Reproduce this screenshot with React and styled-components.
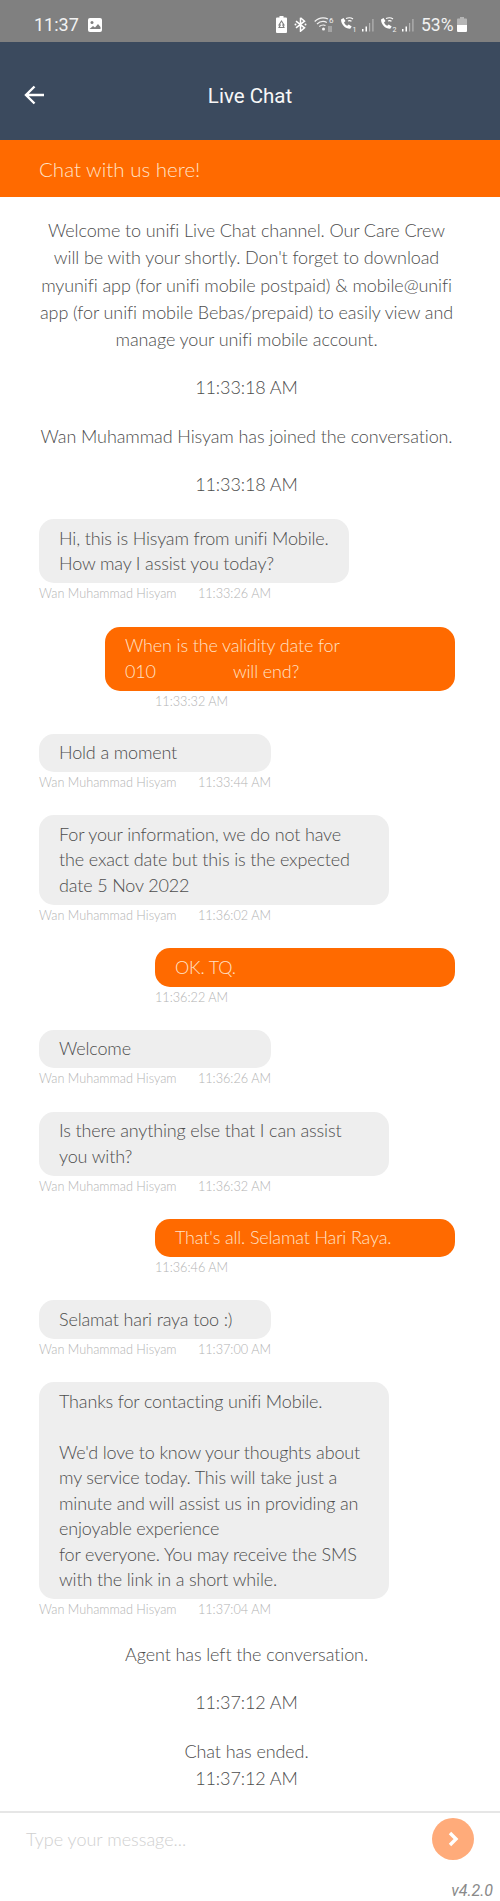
import React from "react";
import styled, { createGlobalStyle } from "styled-components";

const GlobalStyle = createGlobalStyle`
  html, body {
    margin: 0;
    padding: 0;
    background: #ffffff;
  }
  * {
    box-sizing: border-box;
  }
`;

const messages = [
  { from: "agent", time: "11:33:26 AM", lines: ["Hi, this is Hisyam from unifi Mobile.", "How may I assist you today?"], gap: 0 },
  { from: "me", time: "11:33:32 AM", width: 350, redacted: true, gap: 24.2 },
  { from: "agent", time: "11:33:44 AM", lines: ["Hold a moment"], gap: 24.2 },
  { from: "agent", time: "11:36:02 AM", width: 350, lines: ["For your information, we do not have", "the exact date but this is the expected", "date 5 Nov 2022"], gap: 24.2 },
  { from: "me", time: "11:36:22 AM", lines: ["OK. TQ."], gap: 24.2 },
  { from: "agent", time: "11:36:26 AM", lines: ["Welcome"], gap: 24.2 },
  { from: "agent", time: "11:36:32 AM", width: 350, lines: ["Is there anything else that I can assist", "you with?"], gap: 24.2 },
  { from: "me", time: "11:36:46 AM", lines: ["That's all. Selamat Hari Raya."], gap: 24.2 },
  { from: "agent", time: "11:37:00 AM", lines: ["Selamat hari raya too :)"], gap: 24.2 },
  {
    from: "agent",
    time: "11:37:04 AM",
    width: 350,
    lines: [
      "Thanks for contacting unifi Mobile.",
      "",
      "We'd love to know your thoughts about",
      "my service today. This will take just a",
      "minute and will assist us in providing an",
      "enjoyable experience",
      "for everyone. You may receive the SMS",
      "with the link in a short while.",
    ],
    gap: 24.2,
  },
];

function StatusIcons() {
  return (
    <StatusRight>
      <svg width="11" height="17" viewBox="0 0 11 17">
        <path d="M3.5 0h4v1.5H10a1 1 0 0 1 1 1V16a1 1 0 0 1-1 1H1a1 1 0 0 1-1-1V2.500a1 1 0 0 1 1-1h2.500z" fill="#fff" />
        <path d="M5.500 5l2.500 4H6.800l1.200 2.500H3l1.300-2.500H3z" fill="none" stroke="#808080" strokeWidth="1.100" />
      </svg>
      <svg width="13" height="15" viewBox="0 0 13 15" style={{ marginLeft: 7 }}>
        <path d="M6.500 0.800v13.400l4-3.400-8.500-6.600M6.500 0.800l4 3.400L2 10.800" fill="none" stroke="#fff" strokeWidth="1.500" />
        <circle cx="1.500" cy="7.500" r="1" fill="#fff" />
        <circle cx="11.500" cy="7.500" r="1" fill="#fff" />
      </svg>
      <svg width="20" height="17" viewBox="0 0 20 17" style={{ marginLeft: 7 }}>
        <path d="M0.700 5.500C3 3 6 1.800 9 1.800c2 0 3.500.4 5 1.200M3 8c1.800-1.700 4-2.600 6-2.600 1.400 0 2.600.3 3.800 1M5.300 10.500C6.500 9.500 8 9 9.300 9c.8 0 1.500.1 2.200.5" fill="none" stroke="#f2f2f2" strokeWidth="1.200" />
        <circle cx="9.500" cy="13" r="1.500" fill="#f2f2f2" />
        <text x="15" y="7" fontFamily="Roboto, sans-serif" fontSize="8" fill="#f2f2f2">6</text>
        <path d="M15 10v6M17 10v6" stroke="#b8b8b8" strokeWidth="1.300" />
      </svg>
      <CallIcon slot="1" />
      <Bars />
      <CallIcon slot="2" />
      <Bars />
      <BatteryText>53%</BatteryText>
      <svg width="10" height="15" viewBox="0 0 10 15">
        <path d="M3 0h4v1.500h2a1 1 0 0 1 1 1V8H0V2.500a1 1 0 0 1 1-1h2z" fill="#b5b5b5" />
        <path d="M0 8h10v6a1 1 0 0 1-1 1H1a1 1 0 0 1-1-1z" fill="#fff" />
      </svg>
    </StatusRight>
  );
}

function CallIcon({ slot }) {
  return (
    <svg width="17" height="17" viewBox="0 0 17 17" style={{ marginLeft: 6 }}>
      <path d="M1 3.500l2.500-1.500 2 3-1.500 1.500c.7 1.600 1.700 2.600 3.300 3.300l1.400-1.400 3 2-1.500 2.400C5.500 13 1 8.500 1 3.500z" fill="#fff" />
      <path d="M6 2.500c2.500-1 5-1 7 .5M8 5c1.300-.5 2.400-.5 3.500.3" fill="none" stroke="#fff" strokeWidth="1.100" />
      <text x="12.500" y="15.500" fontFamily="Roboto, sans-serif" fontSize="7" fill="#f2f2f2">{slot}</text>
    </svg>
  );
}

function Bars() {
  return (
    <svg width="13" height="14" viewBox="0 0 13 14" style={{ marginLeft: 4 }}>
      <path d="M1 11h1.500v2.500H1zM4.500 8.500H6v5H4.500z" fill="#ffffff" />
      <path d="M8 5h1.200v8.500H8zM11.300 1h1.200v12.500h-1.200z" fill="#b5b5b5" />
    </svg>
  );
}

function Bubble({ message }) {
  const mine = message.from === "me";
  return (
    <MessageBlock $mine={mine} $gap={message.gap} $width={message.width}>
      <MessageBubble $mine={mine}>
        {message.redacted ? (
          <>
            <BubbleLine>When is the validity date for</BubbleLine>
            <BubbleLine>010<Redacted />will end?</BubbleLine>
          </>
        ) : (
          message.lines.map((line, i) => <BubbleLine key={i}>{line || "\u00a0"}</BubbleLine>)
        )}
      </MessageBubble>
      <MessageMeta $mine={mine}>
        {!mine && <span>Wan Muhammad Hisyam</span>}
        <span>{message.time}</span>
      </MessageMeta>
    </MessageBlock>
  );
}

export default function App() {
  return (
    <Page>
      <GlobalStyle />
      <StatusBar>
        <StatusLeft>
          <StatusTime>11:37</StatusTime>
          <svg width="14" height="14" viewBox="0 0 14 14">
            <rect width="14" height="14" rx="2" fill="#fff" />
            <circle cx="4" cy="4.500" r="1.500" fill="#808080" />
            <path d="M1.500 11l3.500-3 2 1.500L10 6l2.500 3v2z" fill="#808080" />
          </svg>
        </StatusLeft>
        <StatusIcons />
      </StatusBar>
      <Header>
        <BackButton>
          <svg width="21" height="20" viewBox="0 0 21 20">
            <path d="M20 10H2M10.500 1.500L2 10l8.500 8.500" fill="none" stroke="#fff" strokeWidth="2.400" />
          </svg>
        </BackButton>
        <HeaderTitle>Live Chat</HeaderTitle>
      </Header>
      <Banner>Chat with us here!</Banner>
      <ChatArea>
        <SystemText $top={20}>
          Welcome to unifi Live Chat channel. Our Care Crew
          <br />
          will be with your shortly. Don't forget to download
          <br />
          myunifi app (for unifi mobile postpaid) &amp; mobile@unifi
          <br />
          app (for unifi mobile Bebas/prepaid) to easily view and
          <br />
          manage your unifi mobile account.
        </SystemText>
        <SystemText $top={21}>11:33:18 AM</SystemText>
        <SystemText $top={21}>Wan Muhammad Hisyam has joined the conversation.</SystemText>
        <SystemText $top={21}>11:33:18 AM</SystemText>
        <MessageList>
          {messages.map((message) => (
            <Bubble key={message.time} message={message} />
          ))}
        </MessageList>
        <SystemText $top={23}>Agent has left the conversation.</SystemText>
        <SystemText $top={21}>11:37:12 AM</SystemText>
        <SystemText $top={21}>Chat has ended.</SystemText>
        <SystemText $top={0}>11:37:12 AM</SystemText>
      </ChatArea>
      <Composer>
        <Placeholder>Type your message...</Placeholder>
        <SendButton>
          <svg width="13" height="16" viewBox="0 0 13 16">
            <path d="M3 2l6 6-6 6" fill="none" stroke="#fff" strokeWidth="3.400" />
          </svg>
        </SendButton>
      </Composer>
      <Version>v4.2.0</Version>
    </Page>
  );
}

const Page = styled.div`
  width: 500px;
  height: 1901px;
  display: flex;
  flex-direction: column;
  overflow: hidden;
  background: #ffffff;
  font-family: "Lato", "Liberation Sans", sans-serif;
  font-weight: 300;
  color: #4d4d4d;
`;
const StatusBar = styled.div`
  height: 42px;
  flex: none;
  background: #808080;
  padding: 7px 33px 0 34px;
  display: flex;
  align-items: center;
  justify-content: space-between;
  color: #f2f2f2;
  font-family: "Roboto", sans-serif;
  font-weight: 400;
`;
const StatusLeft = styled.div`
  display: flex;
  align-items: center;
  gap: 9px;
`;
const StatusTime = styled.span`
  font-size: 18px;
`;
const StatusRight = styled.div`
  display: flex;
  align-items: center;
`;
const BatteryText = styled.span`
  font-size: 17.5px;
  margin: 0 3.5px 0 7px;
`;
const Header = styled.header`
  height: 98px;
  flex: none;
  background: #3b4a5e;
  padding-top: 10px;
  display: flex;
  align-items: center;
  justify-content: center;
  position: relative;
`;
const BackButton = styled.div`
  position: absolute;
  left: 24px;
  top: 43px;
  display: flex;
`;
const HeaderTitle = styled.h1`
  margin: 0;
  font-family: "Roboto", sans-serif;
  font-weight: 400;
  font-size: 20.5px;
  color: #f7f7f7;
`;
const Banner = styled.div`
  height: 57px;
  flex: none;
  background: #ff6a00;
  padding-left: 39px;
  display: flex;
  align-items: center;
  font-size: 20.5px;
  color: #ffe2c8;
`;
const ChatArea = styled.main`
  flex: 1;
  display: flex;
  flex-direction: column;
  min-height: 0;
`;
const SystemText = styled.div`
  margin-top: ${(p) => p.$top}px;
  font-size: 18px;
  letter-spacing: -0.1px;
  line-height: 27.3px;
  text-align: center;
  white-space: nowrap;
  padding-right: 7px;
`;
const MessageList = styled.div`
  display: flex;
  flex-direction: column;
  padding: 21px 45px 0 39px;
`;
const MessageBlock = styled.div`
  display: flex;
  flex-direction: column;
  margin-top: ${(p) => p.$gap}px;
  align-self: ${(p) => (p.$mine ? "flex-end" : "flex-start")};
  width: ${(p) => (p.$width ? `${p.$width}px` : p.$mine ? "300px" : "fit-content")};
`;
const MessageBubble = styled.div`
  padding: 6.5px 20px;
  border-radius: 15px;
  font-size: 18px;
  letter-spacing: -0.15px;
  line-height: 25.5px;
  white-space: nowrap;
  background: ${(p) => (p.$mine ? "#ff6a00" : "#eeeeee")};
  color: ${(p) => (p.$mine ? "#ffe2c8" : "#4d4d4d")};
`;
const BubbleLine = styled.div`
  min-height: 25.5px;
`;
const Redacted = styled.span`
  display: inline-block;
  width: 77px;
`;
const MessageMeta = styled.div`
  display: flex;
  justify-content: space-between;
  gap: 21px;
  width: ${(p) => (p.$mine ? "auto" : "232px")};
  margin-top: 2px;
  font-size: 12.7px;
  line-height: 17px;
  color: #b3b3b3;
  white-space: nowrap;
  ${(p) => p.$mine && "align-self: flex-end; width: 300px;"}
`;
const Composer = styled.div`
  height: 56px;
  flex: none;
  border-top: 2px solid #e6e6e6;
  padding: 5px 26px 0 26px;
  display: flex;
  align-items: flex-start;
  justify-content: space-between;
`;
const Placeholder = styled.div`
  font-size: 18px;
  line-height: 42px;
  color: #d0d0d0;
`;
const SendButton = styled.div`
  width: 42px;
  height: 42px;
  border-radius: 50%;
  background: #ffab7a;
  display: flex;
  align-items: center;
  justify-content: center;
`;
const Version = styled.div`
  height: 34px;
  flex: none;
  padding: 14px 7px 0 0;
  text-align: right;
  font-family: "Roboto", sans-serif;
  font-style: italic;
  font-weight: 400;
  font-size: 16px;
  line-height: 20px;
  color: #8a8a8a;
`;
